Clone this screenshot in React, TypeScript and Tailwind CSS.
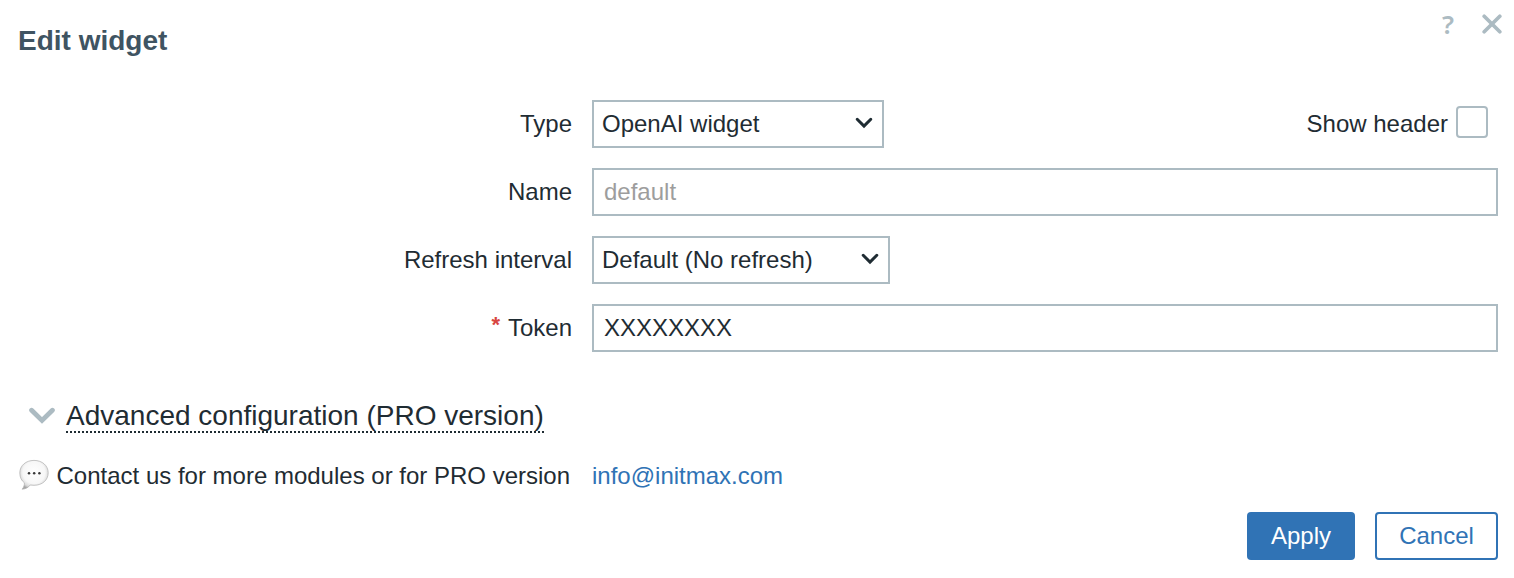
import type { ReactNode } from "react";

function Label({ children, required = false }: { children: ReactNode; required?: boolean }) {
  return (
    <label className="flex w-[572px] shrink-0 items-center justify-end whitespace-pre">
      {required && <span className="mr-2 -mt-1.5 text-[22px] font-bold text-[#d8453f]">*</span>}
      {children}
    </label>
  );
}

function Select({ value, className }: { value: string; className: string }) {
  return (
    <button
      type="button"
      className={`flex h-12 items-center justify-between border-2 border-[#acbbc2] bg-white pr-[9px] pl-2 ${className}`}
    >
      <span className="whitespace-nowrap">{value}</span>
      <svg width="18" height="12" viewBox="0 0 18 12" fill="none" className="-mt-0.5">
        <path d="M2.200 2.300 9 9.100l6.800-6.800" stroke="#1f2c33" strokeWidth="3" strokeLinecap="round" />
      </svg>
    </button>
  );
}

const inputClass =
  "h-12 w-[906px] border-2 border-[#acbbc2] bg-white px-2.5 outline-none placeholder:text-[#9d9d9d] placeholder:opacity-100";

function SpeechBubble() {
  return (
    <svg width="32" height="32" viewBox="0 0 32 32" className="-mt-1 shrink-0">
      <defs>
        <radialGradient id="bubble" cx="0.5" cy="0.42" r="0.6">
          <stop offset="0" stopColor="#ffffff" />
          <stop offset="0.65" stopColor="#f7f7f7" />
          <stop offset="0.86" stopColor="#dadada" />
          <stop offset="1" stopColor="#a4a4a4" />
        </radialGradient>
      </defs>
      <path
        d="M16 2.400C7.700 2.400 1.800 7.700 1.800 15c0 4.400 1.800 7.800 4.600 9.800.1 2.300-.6 4.400-2.200 6.400 3.400-.2 6.200-1.700 8-4.200 1.200.2 2.500.3 3.800.3 8.300 0 14.200-5.200 14.200-12.500C30.200 7.700 24.300 2.400 16 2.400Z"
        fill="url(#bubble)"
        stroke="#adadad"
        strokeWidth="0.700"
      />
      <g fill="#383838">
        <circle cx="11" cy="15.300" r="1.250" />
        <circle cx="16.200" cy="15.300" r="1.250" />
        <circle cx="21.400" cy="15.300" r="1.250" />
      </g>
    </svg>
  );
}

export default function App() {
  return (
    <div className="flex h-[578px] w-[1514px] flex-col bg-white font-['Liberation_Sans',Arial,sans-serif] text-[24px] leading-7 text-[#1f2c33]">
      <header className="flex h-[100px] items-start justify-between pr-3 pl-[18px]">
        <h1 className="pt-[25px] text-[28px] leading-8 font-bold text-[#3f5462]">Edit widget</h1>
        <div className="flex items-center pt-3 text-[#acbbc2]">
          <button
            type="button"
            aria-label="Help"
            className="mr-7 h-6 w-3 text-center font-['Noto_Sans',sans-serif] text-[26px] leading-[21px] font-semibold"
          >
            ?
          </button>
          <button type="button" aria-label="Close" className="size-5">
            <svg width="20" height="20" viewBox="0 0 20 20">
              <path d="m2.200 2.200 15.600 15.600M17.800 2.200 2.200 17.800" stroke="currentColor" strokeWidth="3.700" strokeLinecap="round" />
            </svg>
          </button>
        </div>
      </header>

      <div className="flex flex-col gap-5">
        <div className="flex h-12 items-center gap-5">
          <Label>Type</Label>
          <Select value="OpenAI widget" className="w-[292px]" />
          <label className="mr-[26px] ml-auto flex items-center gap-2">
            Show header
            <span className="-mt-1 size-8 rounded-[4px] border-2 border-[#acbbc2] bg-white" />
          </label>
        </div>
        <div className="flex h-12 gap-5">
          <Label>Name</Label>
          <input className={inputClass} placeholder="default" />
        </div>
        <div className="flex h-12 gap-5">
          <Label>Refresh interval</Label>
          <Select value="Default (No refresh)" className="w-[298px]" />
        </div>
        <div className="flex h-12 gap-5">
          <Label required>Token</Label>
          <input className={inputClass} defaultValue="XXXXXXXX" />
        </div>
      </div>

      <div className="mt-12 flex h-[34px] items-start pl-7">
        <svg width="28" height="18" viewBox="0 0 28 18" fill="none" className="mt-[7px] mr-2.5 shrink-0">
          <path d="M3.600 3.200 14 13.400 24.400 3.200" stroke="#acbbc2" strokeWidth="4.800" strokeLinecap="round" />
        </svg>
        <button type="button" className="h-[33px] border-b-2 border-dotted border-[#1f2c33] text-[28px] leading-8 whitespace-nowrap">
          Advanced configuration (PRO version)
        </button>
      </div>

      <div className="mt-[26px] flex h-8 items-center pl-[18px]">
        <SpeechBubble />
        <span className="ml-[6.500px] w-[535.500px] whitespace-nowrap">Contact us for more modules or for PRO version</span>
        <a href="mailto:info@initmax.com" className="text-[#2f73b5]">
          info@initmax.com
        </a>
      </div>

      <footer className="mt-5 flex justify-end gap-5 pr-4">
        <button type="button" className="h-12 w-[108px] rounded-[4px] bg-[#3073b5] text-white">
          Apply
        </button>
        <button type="button" className="h-12 w-[123px] rounded-[4px] border-2 border-[#3073b5] bg-white text-[#3073b5]">
          Cancel
        </button>
      </footer>
    </div>
  );
}
